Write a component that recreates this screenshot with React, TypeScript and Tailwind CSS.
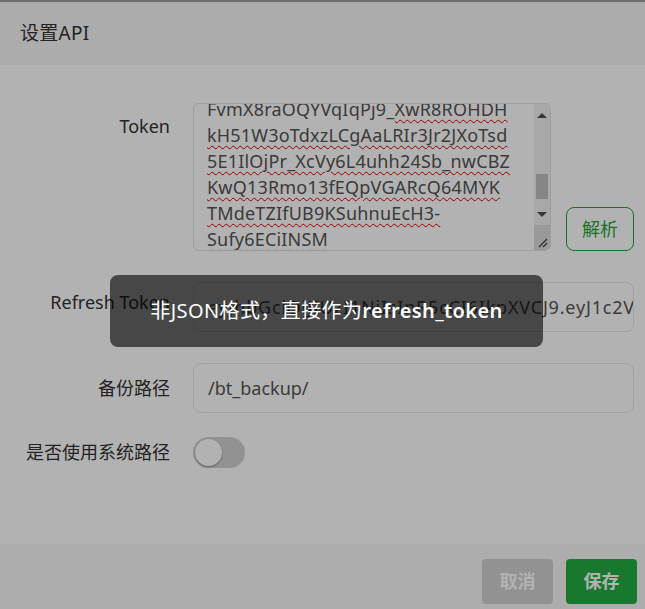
import React from 'react';

const FONT = { fontFamily: '"Noto Sans", "Noto Sans CJK SC", sans-serif' };

// textarea content as it wraps in the reference, scrolled down a little
const TOKEN_LINES = [
  { plain: 'FvmX8raOQYVqIqPj9_', marked: 'XwR8ROHDH' },
  { plain: '', marked: 'kH51W3oTdxzLCgAaLRIr3Jr2JXoTsd' },
  { plain: '', marked: '5E1IlOjPr_XcVy6L4uhh24Sb_nwCBZ' },
  { plain: '', marked: 'KwQ13Rmo13fEQpVGARcQ64MYK' },
  { plain: '', marked: 'TMdeTZIfUB9KSuhnuEcH3-' },
  { plain: '', marked: 'Sufy6ECiINSM' },
];

function Label({ children, className = '' }: { children: React.ReactNode; className?: string }) {
  return (
    <div className={`w-[170px] shrink-0 text-right text-[18px] text-[#333] ${className}`}>{children}</div>
  );
}

function TokenBox() {
  return (
    <div className="relative w-[358px] h-[148px] rounded-[6px] border border-[#e2e2e2] bg-white overflow-hidden">
      <div className="pl-[13px] pr-[20px] -mt-[8px] text-[18px] leading-[26px] tracking-[0.2px] text-[#555] whitespace-nowrap">
        {TOKEN_LINES.map((l, i) => (
          <div key={i}>
            {l.plain}
            <span className="underline decoration-wavy decoration-[#e00000] decoration-1 underline-offset-[3px]">{l.marked}</span>
          </div>
        ))}
      </div>
      {/* scrollbar */}
      <div className="absolute right-0 top-0 bottom-0 w-[16px] flex flex-col bg-[#f1f1f1]">
        <div className="h-[22px] flex items-center justify-center">
          <div className="w-0 h-0 border-l-[5px] border-r-[5px] border-b-[5px] border-l-transparent border-r-transparent border-b-[#505050]" />
        </div>
        <div className="flex-1 relative">
          <div className="absolute left-[2px] right-[2px] top-[48px] h-[25px] bg-[#c1c1c1]" />
        </div>
        <div className="h-[22px] flex items-center justify-center">
          <div className="w-0 h-0 border-l-[5px] border-r-[5px] border-t-[5px] border-l-transparent border-r-transparent border-t-[#505050]" />
        </div>
        <div className="h-[25px] bg-[#dcdcdc] relative">
          <svg className="absolute right-[2px] bottom-[2px]" width="12" height="12" viewBox="0 0 12 12">
            <path d="M11 3 L3 11 M11 7 L7 11" stroke="#404040" strokeWidth="1.2" />
          </svg>
        </div>
      </div>
    </div>
  );
}

export default function App() {
  return (
    <div className="relative w-[645px] h-[609px] overflow-hidden bg-white flex flex-col" style={FONT}>
      <div className="h-[2px] bg-[#9f9f9f]" />

      {/* Header */}
      <div className="h-[63px] bg-[#f7f7f7] flex items-center px-[20px] text-[19px] tracking-[0.3px] text-[#333]">设置API</div>

      {/* Body */}
      <div className="flex-1 flex flex-col pt-[38px]">
        <div className="flex items-end">
          <Label className="self-start mt-[10px]">Token</Label>
          <div className="ml-[23px]">
            <TokenBox />
          </div>
          <button className="ml-[15px] w-[68px] h-[44px] rounded-[8px] border border-[#20a53a] bg-white text-[18px] text-[#20a53a]">
            解析
          </button>
        </div>

        <div className="flex items-center mt-[31px]">
          <Label className="mb-[9px]">Refresh Token</Label>
          <div className="ml-[23px] w-[441px] h-[50px] rounded-[8px] border border-[#e6e6e6] flex items-center px-[14px] overflow-hidden">
            <span className="text-[18px] text-[#555] whitespace-nowrap tracking-[0.8px]">eyJhbGciOiJIUzI1NiIsInR5cCI6IkpXVCJ9.eyJ1c2VyX2lkIjoi</span>
          </div>
        </div>

        <div className="flex items-center mt-[31px]">
          <Label>备份路径</Label>
          <div className="ml-[23px] w-[441px] h-[50px] rounded-[8px] border border-[#e6e6e6] flex items-center px-[14px]">
            <span className="text-[18px] text-[#555]">/bt_backup/</span>
          </div>
        </div>

        <div className="flex items-center mt-[24px]">
          <Label>是否使用系统路径</Label>
          <div className="ml-[23px] w-[52px] h-[31px] rounded-full bg-[#d2d2d2] p-[2px] flex items-center">
            <div className="w-[27px] h-[27px] rounded-full bg-white shadow-[0_1px_2px_rgba(0,0,0,0.35)]" />
          </div>
        </div>
      </div>

      {/* Footer */}
      <div className="h-[65px] bg-[#f7f8f7] flex items-end justify-end gap-[13px] pr-[8px] pb-[5px]">
        <button className="w-[71px] h-[45px] rounded-[4px] bg-[#d2d2d2] text-white text-[18px] font-bold">取消</button>
        <button className="w-[71px] h-[45px] rounded-[4px] bg-[#21ad42] text-white text-[18px] font-bold">保存</button>
      </div>

      {/* modal shade */}
      <div className="absolute inset-0 bg-black/30" />

      {/* toast */}
      <div className="absolute left-[110px] top-[275px] w-[433px] h-[72px] rounded-[8px] bg-black/60 flex items-center justify-center text-white text-[20px] tracking-[0.4px]">
        <span>
          非JSON格式，直接作为<span className="font-semibold">refresh_token</span>
        </span>
      </div>
    </div>
  );
}
